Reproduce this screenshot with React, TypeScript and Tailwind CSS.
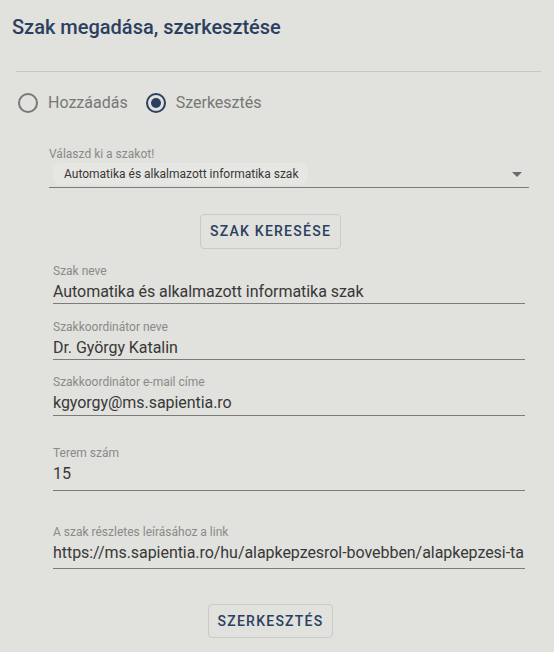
import React from 'react';

type FieldProps = { label: string; value: string; mt: string; pb: string };

function Field({ label, value, mt, pb }: FieldProps) {
  return (
    <div className={`ml-[53px] w-[472px] ${mt}`}>
      <div className="h-[14px] text-[12px] leading-[14px] text-[#8a8a88]">{label}</div>
      <div
        className={`mt-[4px] whitespace-nowrap border-b border-[#7b7b79] text-[16px] leading-[20px] tracking-[-0.05px] text-[#383838] ${pb}`}
      >
        {value}
      </div>
    </div>
  );
}

function Radio({ checked, label }: { checked?: boolean; label: string }) {
  return (
    <label className="flex items-center gap-[10px]">
      <span
        className={`flex h-[20px] w-[20px] items-center justify-center rounded-full border-2 ${
          checked ? 'border-[#2b3f5f]' : 'border-[#777775]'
        }`}
      >
        {checked && <span className="h-[10px] w-[10px] rounded-full bg-[#2b3f5f]" />}
      </span>
      <span className="text-[16px] leading-[20px] text-[#777775]">{label}</span>
    </label>
  );
}

export default function App() {
  return (
    <div className="min-h-[652px] w-full bg-[#e1e1dd] font-['Roboto',sans-serif]">
      <div className="w-[541px] pb-4">
        <h1 className="pl-3 pt-[15px] text-[20px] font-medium leading-[24px] text-[#2b3f5f]">
          Szak megadása, szerkesztése
        </h1>
        <div className="ml-4 mt-[32px] border-t border-[#c6c6c3]" />

        <div className="mt-[21px] flex items-center gap-[18px] pl-[18px]">
          <Radio label="Hozzáadás" />
          <Radio checked label="Szerkesztés" />
        </div>

        <div className="ml-[49px] mt-[34px] w-[480px]">
          <div className="h-[14px] text-[12px] leading-[14px] text-[#8a8a88]">Válaszd ki a szakot!</div>
          <div className="mt-[2px] flex items-center justify-between border-b border-[#7b7b79] pb-[2px]">
            <span className="ml-[4px] rounded-[8px] bg-[#e6e6e3] py-[4px] pl-[11px] pr-[10px] text-[12px] leading-[14px] text-[#383838]">
              Automatika és alkalmazott informatika szak
            </span>
            <svg width="10" height="5" viewBox="0 0 10 5" className="mr-[7px]">
              <path d="M0 0 L10 0 L5 5 Z" fill="#6b6b6b" />
            </svg>
          </div>
        </div>

        <div className="mt-[26px] flex justify-center">
          <button className="h-[35px] rounded-[4px] border border-[#c9c9c5] px-[9px] text-[14px] font-medium tracking-[1.25px] text-[#2b3f5f]">
            SZAK KERESÉSE
          </button>
        </div>

        <Field mt="mt-[15px]" pb="pb-[1px]" label="Szak neve" value="Automatika és alkalmazott informatika szak" />
        <Field mt="mt-[16px]" pb="pb-[1px]" label="Szakkoordinátor neve" value="Dr. György Katalin" />
        <Field mt="mt-[15px]" pb="pb-[2px]" label="Szakkoordinátor e-mail címe" value="kgyorgy@ms.sapientia.ro" />
        <Field mt="mt-[30px]" pb="pb-[6px]" label="Terem szám" value="15" />
        <Field
          mt="mt-[34px]"
          pb="pb-[5px]"
          label="A szak részletes leírásához a link"
          value="https://ms.sapientia.ro/hu/alapkepzesrol-bovebben/alapkepzesi-ta"
        />

        <div className="mt-[35px] flex justify-center">
          <button className="h-[34px] rounded-[4px] border border-[#c9c9c5] px-[9px] text-[14px] font-medium tracking-[1.25px] text-[#2b3f5f]">
            SZERKESZTÉS
          </button>
        </div>
      </div>
    </div>
  );
}
